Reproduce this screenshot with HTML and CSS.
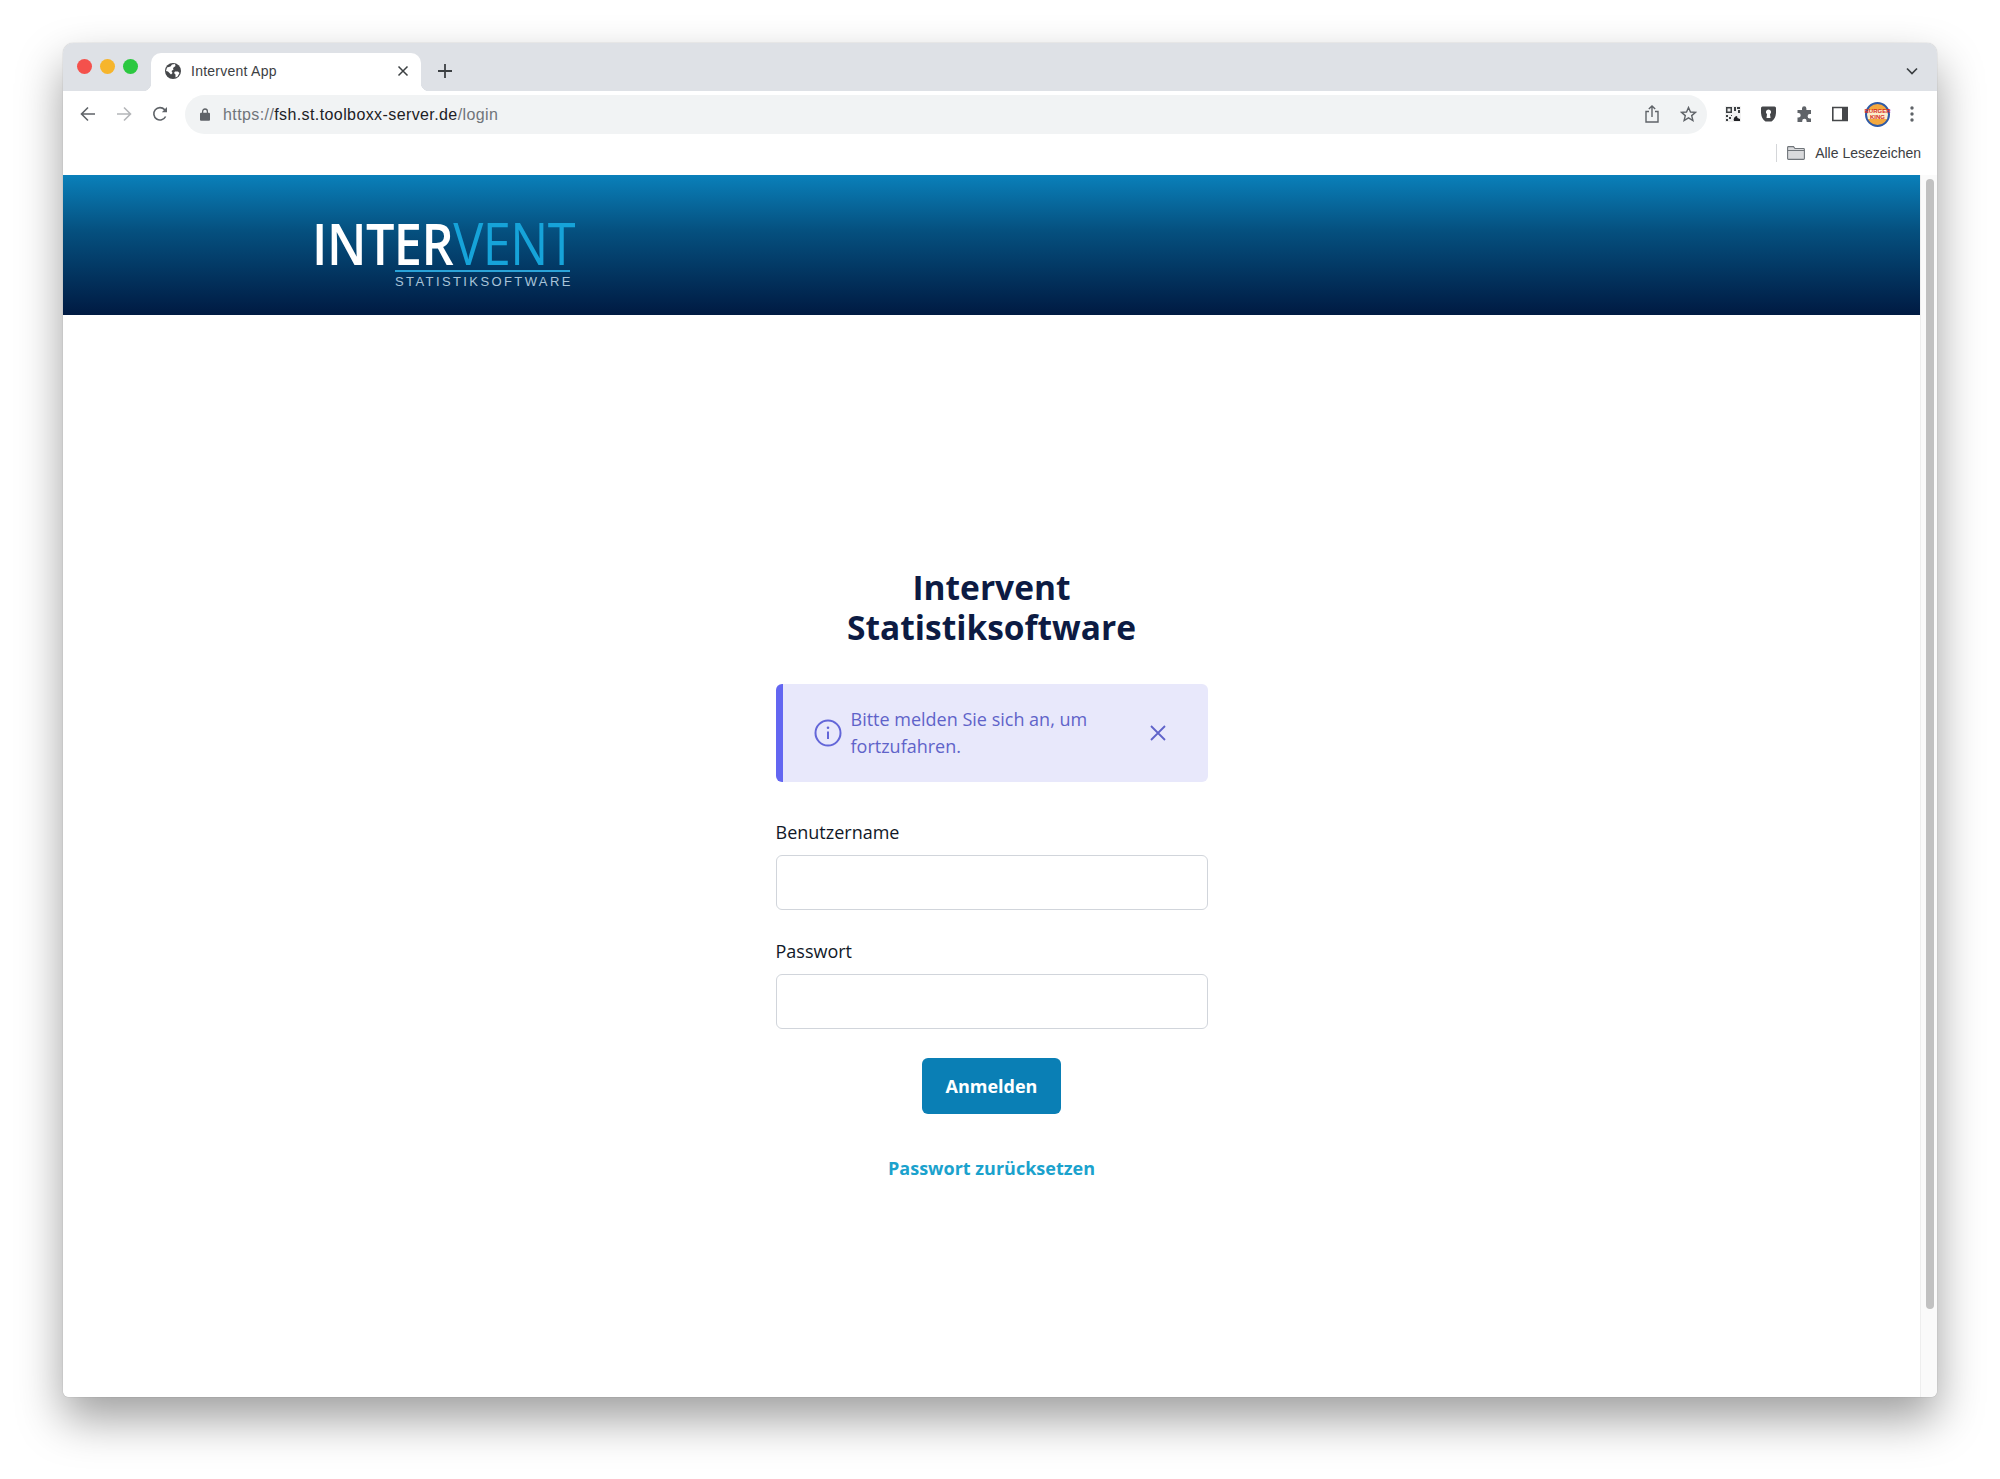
FILE: index.html
```html
<!DOCTYPE html>
<html lang="de">
<head>
    <meta charset="UTF-8">
    <title>Intervent App</title>
    <link rel="stylesheet" href="styles.css">
</head>
<body>
    <div class="window">
        <div class="tabstrip">
            <div class="lights">
                <span class="light red"></span>
                <span class="light yellow"></span>
                <span class="light green"></span>
            </div>
            <div class="tab">
                <svg class="favicon" width="16" height="16" viewBox="0 0 16 16">
                    <circle cx="8" cy="8" r="8" fill="#45474a"/>
                    <path d="M2 4.5 5.5 3.5 7 1.5 10 1 10.5 3 8 5 8.5 6.5 6.5 8 7.5 10 6 11.5 3 8.5 1 8ZM10 8.5 13 8.5 14.5 10 12.5 13.5 10.5 14.5 10.5 11.5 9 10Z" fill="#fff"/>
                </svg>
                <span class="tab-title">Intervent App</span>
                <svg class="tab-close" width="12" height="12" viewBox="0 0 12 12">
                    <path d="M1.5 1.5 10.5 10.5M10.5 1.5 1.5 10.5" stroke="#3c4043" stroke-width="1.5" fill="none"/>
                </svg>
            </div>
            <svg class="new-tab" width="14" height="14" viewBox="0 0 14 14">
                <path d="M7 0V14M0 7H14" stroke="#3c4043" stroke-width="1.8" fill="none"/>
            </svg>
            <svg class="tab-menu" width="12" height="8" viewBox="0 0 12 8">
                <path d="M1 1.5 6 6.5 11 1.5" stroke="#3c4043" stroke-width="1.7" fill="none"/>
            </svg>
        </div>

        <div class="toolbar">
            <div class="nav">
                <svg width="16" height="16" viewBox="0 0 16 16">
                    <path d="M15 8H2M8 1.5 1.5 8 8 14.5" stroke="#5f6368" stroke-width="1.6" fill="none"/>
                </svg>
                <svg width="16" height="16" viewBox="0 0 16 16">
                    <path d="M1 8H14M8 1.5 14.5 8 8 14.5" stroke="#b4b6b9" stroke-width="1.6" fill="none"/>
                </svg>
                <svg width="16" height="16" viewBox="0 0 16 16">
                    <path d="M13.6 10.5A6.2 6.2 0 1 1 12.6 3.6L14.5 5.5" stroke="#5f6368" stroke-width="1.6" fill="none"/>
                    <path d="M15 1V6.2H9.8Z" fill="#5f6368"/>
                </svg>
            </div>
            <div class="omnibox">
                <svg class="lock" width="10" height="13" viewBox="0 0 10 13">
                    <path d="M2.6 5V3.4a2.4 2.4 0 0 1 4.8 0V5" stroke="#5f6368" stroke-width="1.3" fill="none"/>
                    <rect y="4.8" width="10" height="8" rx="1" fill="#5f6368"/>
                </svg>
                <span class="url">https://<span class="url-host">fsh.st.toolboxx-server.de</span>/login</span>
                <svg class="omni-icon" width="14" height="18" viewBox="0 0 14 18">
                    <path d="M4 6.5H1V17H13V6.5H10M7 12V1M3.8 4 7 1 10.2 4" stroke="#5f6368" stroke-width="1.4" fill="none"/>
                </svg>
                <svg class="omni-icon" width="17" height="16" viewBox="0 0 17 16">
                    <path d="M8.5 1.5 10.5 6 15.5 6.4 11.7 9.6 12.9 14.5 8.5 11.9 4.1 14.5 5.3 9.6 1.5 6.4 6.5 6Z" stroke="#5f6368" stroke-width="1.4" fill="none"/>
                </svg>
            </div>
            <div class="extensions">
                <svg width="16" height="16" viewBox="0 0 16 16">
                    <rect width="16" height="16" fill="#f1f1f1"/>
                    <path d="M1 1H7V7H1ZM2.5 2.5V5.5H5.5V2.5Z" fill="#3c4043" fill-rule="evenodd"/>
                    <path d="M9 1H11V5H9ZM12 1H15V3H12ZM13 4H15V7H13ZM1 9H3V11H1ZM4 11H6V13H4ZM1 13H3V15H1ZM6 9H7V10H6Z" fill="#3c4043"/>
                    <path d="M9 15A3.5 3.5 0 0 1 12 10L12.5 12 15 13 15 15Z" fill="#202124"/>
                </svg>
                <svg width="17" height="16" viewBox="0 0 17 16">
                    <path d="M1 2Q1 .5 2.5 .5H14.5Q16 .5 16 2V7Q15.5 13 11.5 15.5H5.5Q1.500 13 1 7ZM8.500 3.500A2.600 2.600 0 0 0 7 8.200L6.500 12H10.500L10 8.200A2.600 2.600 0 0 0 8.500 3.500Z" fill="#45474a" fill-rule="evenodd"/>
                </svg>
                <svg width="17" height="17" viewBox="0 0 17 17">
                    <path d="M6 2.500A2.200 2.200 0 0 1 10.400 2.500V4H15V8H13.800A2.200 2.200 0 0 0 13.800 12.400H15V16H10.600V15A2.200 2.200 0 0 0 6.200 15V16H1.500V11.500H2.500A2.200 2.200 0 0 0 2.500 7.100H1.500V4H6Z" fill="#5f6368"/>
                </svg>
                <svg width="16" height="16" viewBox="0 0 16 16">
                    <path d="M.8 1.500H15.200V14.500H.8Z" fill="#fff" stroke="#45474a" stroke-width="1.600"/>
                    <rect x="10" y="1.500" width="5.200" height="13" fill="#45474a"/>
                </svg>
                <div class="avatar"><span class="avatar-text">BURGER<br>KING</span></div>
                <svg width="4" height="16" viewBox="0 0 4 16">
                    <circle cx="2" cy="2" r="1.700" fill="#5f6368"/>
                    <circle cx="2" cy="8" r="1.700" fill="#5f6368"/>
                    <circle cx="2" cy="14" r="1.700" fill="#5f6368"/>
                </svg>
            </div>
        </div>

        <div class="bookmarks">
            <span class="bookmarks-sep"></span>
            <svg width="18" height="14" viewBox="0 0 18 14">
                <path d="M.6 12.500V1.500Q.6 .6 1.500 .6H6.500L8 2.500H16.500Q17.400 2.500 17.400 3.400V12.500Q17.400 13.400 16.500 13.400H1.500Q.6 13.400 .6 12.500Z" fill="#d9dadc" stroke="#70757a" stroke-width="1.100"/>
                <path d="M.6 4.500H17.400" stroke="#70757a" stroke-width="1"/>
            </svg>
            <span class="bookmarks-label">Alle Lesezeichen</span>
        </div>

        <div class="viewport">
            <div class="page">
                <div class="header">
                    <div class="logo">
                        <div class="logo-name"><span class="logo-inter">INTER</span><span class="logo-vent">VENT</span></div>
                        <div class="logo-sub">STATISTIKSOFTWARE</div>
                    </div>
                </div>

                <div class="login">
                    <h1>Intervent<br>Statistiksoftware</h1>

                    <div class="alert">
                        <svg class="alert-icon" width="28" height="28" viewBox="0 0 28 28">
                            <circle cx="14" cy="14" r="12.500" stroke="#6366d8" stroke-width="2" fill="none"/>
                            <path d="M14 12.500V20" stroke="#6366d8" stroke-width="2"/>
                            <circle cx="14" cy="8.800" r="1.300" fill="#6366d8"/>
                        </svg>
                        <div class="alert-text">Bitte melden Sie sich an, um fortzufahren.</div>
                        <svg class="alert-close" width="16" height="16" viewBox="0 0 16 16">
                            <path d="M1 1 15 15M15 1 1 15" stroke="#5f63c9" stroke-width="1.800" fill="none"/>
                        </svg>
                    </div>

                    <div class="form-group">
                        <label for="username">Benutzername</label>
                        <input type="text" id="username">
                    </div>
                    <div class="form-group">
                        <label for="password">Passwort</label>
                        <input type="password" id="password">
                    </div>

                    <button class="submit">Anmelden</button>
                    <a class="reset" href="#">Passwort zurücksetzen</a>
                </div>
            </div>
            <div class="scrollbar"><div class="scrollbar-thumb"></div></div>
        </div>
    </div>
</body>
</html>
```

FILE: styles.css
```css
* {
    margin: 0;
    padding: 0;
    box-sizing: border-box;
}

body {
    height: 1479px;
    padding: 43px 63px 0;
    background-color: #fff;
    font-family: "Open Sans", sans-serif;
    overflow: hidden;
}

.window {
    display: flex;
    flex-direction: column;
    height: 1354px;
    background-color: #fff;
    border-radius: 10px 10px 6px 6px;
    box-shadow: 0 22px 46px rgba(0, 0, 0, 0.38), 0 0 1px rgba(0, 0, 0, 0.4);
    overflow: hidden;
}

/* browser tabs */
.tabstrip {
    display: flex;
    align-items: center;
    flex: none;
    height: 48px;
    background-color: #dee1e6;
}

.lights {
    display: flex;
    gap: 8px;
    width: 88px;
    padding: 0 0 1px 14px;
}

.light {
    width: 15px;
    height: 15px;
    border-radius: 50%;
}

.red { background-color: #f4514c; }
.yellow { background-color: #f6b52c; }
.green { background-color: #2bc840; }

.tab {
    position: relative;
    display: flex;
    align-items: center;
    align-self: flex-end;
    width: 270px;
    height: 38px;
    padding: 0 12px 2px 14px;
    background-color: #fff;
    border-radius: 10px 10px 0 0;
    font-family: "Liberation Sans", sans-serif;
    font-size: 14px;
    letter-spacing: 0.25px;
    color: #3c4043;
}

.tab::before,
.tab::after {
    content: "";
    position: absolute;
    bottom: 0;
    width: 8px;
    height: 8px;
}

.tab::before {
    left: -8px;
    background: radial-gradient(circle at 0 0, transparent 8px, #fff 8.5px);
}

.tab::after {
    right: -8px;
    background: radial-gradient(circle at 100% 0, transparent 8px, #fff 8.5px);
}

.favicon {
    margin-right: 10px;
}

.tab-title {
    flex: 1;
}

.new-tab {
    margin: 7px 0 0 17px;
}

.tab-menu {
    margin: 7px 19px 0 auto;
}

/* address bar */
.toolbar {
    display: flex;
    align-items: center;
    flex: none;
    height: 43px;
    padding-top: 3px;
    background-color: #fff;
}

.nav {
    display: flex;
    gap: 20px;
    width: 122px;
    padding-left: 17px;
}

.omnibox {
    display: flex;
    align-items: center;
    width: 1522px;
    height: 39px;
    padding: 0 10px 0 15px;
    background-color: #f1f3f4;
    border-radius: 20px;
}

.lock {
    margin-right: 13px;
}

.url {
    flex: 1;
    padding-top: 1px;
    font-family: "Liberation Sans", sans-serif;
    font-size: 16px;
    letter-spacing: 0.4px;
    color: #70757a;
}

.url-host {
    color: #202124;
}

.omni-icon {
    margin-left: 21px;
}

.extensions {
    display: flex;
    align-items: center;
    gap: 19px;
    padding-left: 18px;
}

.avatar {
    display: flex;
    align-items: center;
    justify-content: center;
    width: 25px;
    height: 25px;
    margin: 0 1px 0 -2px;
    background: linear-gradient(180deg, #f3a83f 0 28%, #fbeecb 28% 72%, #f3a83f 72%);
    border: 2px solid #2e5aa6;
    border-radius: 50%;
}

.avatar-text {
    font-family: "Liberation Sans", sans-serif;
    font-size: 6px;
    font-weight: bold;
    line-height: 6px;
    text-align: center;
    color: #d62a1f;
}

/* bookmarks */
.bookmarks {
    display: flex;
    align-items: center;
    justify-content: flex-end;
    flex: none;
    height: 41px;
    padding: 0 16px 3px 0;
    background-color: #fff;
}

.bookmarks-sep {
    width: 1px;
    height: 18px;
    margin-right: 10px;
    background-color: #d4d6d9;
}

.bookmarks-label {
    margin-left: 10px;
    font-family: "Liberation Sans", sans-serif;
    font-size: 14px;
    color: #3c4043;
}

/* page */
.viewport {
    display: flex;
    flex: 1;
    min-height: 0;
}

.page {
    flex: 1;
    background-color: #fff;
}

.scrollbar {
    flex: none;
    width: 17px;
    padding: 4px 3px 0 5px;
    background-color: #fafafa;
    border-left: 1px solid #eeeeee;
}

.scrollbar-thumb {
    height: 1130px;
    background-color: #c1c1c1;
    border-radius: 5px;
}

.header {
    display: flex;
    align-items: center;
    height: 140px;
    padding-left: 249px;
    background: linear-gradient(180deg, #0a80ba 0%, #05507f 40%, #001a42 100%);
}

.logo {
    display: flex;
    flex-direction: column;
    margin-top: 18px;
}

.logo-name {
    height: 52px;
    font-size: 58px;
    font-weight: 600;
    line-height: 50px;
    letter-spacing: -0.6px;
    white-space: nowrap;
    transform: scaleX(0.87);
    transform-origin: left center;
}

.logo-inter {
    color: #fff;
}

.logo-vent {
    font-weight: 400;
    color: #16a3d9;
}

.logo-sub {
    margin-left: 83px;
    width: 175px;
    border-top: 2px solid #2aa3d8;
    font-family: "Liberation Sans", sans-serif;
    font-size: 13px;
    line-height: 19px;
    letter-spacing: 2.4px;
    white-space: nowrap;
    color: #a9c4d9;
}

.login {
    display: flex;
    flex-direction: column;
    width: 432px;
    margin: 252px auto 0;
}

.login h1 {
    margin-bottom: 37px;
    font-size: 33.5px;
    font-weight: 700;
    line-height: 40px;
    text-align: center;
    color: #0c1b43;
}

.alert {
    display: flex;
    align-items: center;
    height: 98px;
    margin-bottom: 37px;
    padding: 0 42px 0 31px;
    background-color: #e8e8fb;
    border-left: 7px solid #6366f1;
    border-radius: 6px;
    color: #5f63c9;
}

.alert-icon {
    flex: none;
    margin-right: 9px;
}

.alert-text {
    flex: 1;
    font-size: 18px;
    line-height: 27px;
}

.alert-close {
    flex: none;
}

.form-group {
    margin-bottom: 28px;
}

.form-group label {
    display: block;
    margin-bottom: 9px;
    font-size: 18px;
    line-height: 27px;
    color: #111827;
}

.form-group input {
    display: block;
    width: 100%;
    height: 55px;
    border: 1px solid #d1d5db;
    border-radius: 6px;
    background-color: #fff;
}

.submit {
    align-self: center;
    width: 139px;
    height: 56px;
    margin: 1px 0 41px;
    background-color: #0a7fb5;
    border: none;
    border-radius: 6px;
    font-family: "Open Sans", sans-serif;
    font-size: 18px;
    font-weight: 700;
    color: #fff;
}

.reset {
    font-size: 18px;
    font-weight: 700;
    line-height: 27px;
    text-align: center;
    text-decoration: none;
    color: #1ba2cd;
}
```
